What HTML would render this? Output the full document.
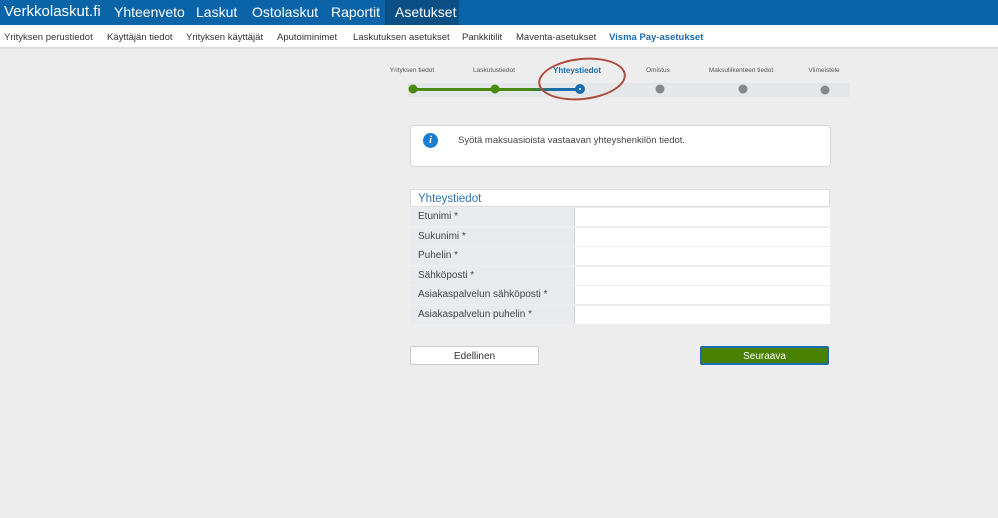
<!DOCTYPE html>
<html><head><meta charset="utf-8"><style>
*{margin:0;padding:0;box-sizing:border-box}
body{width:998px;height:518px;background:#ededed;font-family:"Liberation Sans",sans-serif;position:relative;overflow:hidden}
.top{position:absolute;left:0;top:0;width:998px;height:25px;background:#0b64a8}
.top span{position:absolute;top:4px;color:#fff;font-size:14px}
.act{position:absolute;left:385px;top:0;width:74px;height:25px;background:#0a4f86}
.sub{position:absolute;left:0;top:25px;width:998px;height:24px;background:#fff;border-bottom:2px solid #ddd}
.sub span{position:absolute;top:7px;font-size:9.5px;color:#333}
.lbl{position:absolute;top:67px;font-size:6.5px;color:#555;transform:translateX(-50%);white-space:nowrap}
.dot{position:absolute;width:9px;height:9px;border-radius:50%;background:#888;transform:translate(-50%,-50%)}
.box{position:absolute;background:#fff;border:1px solid #d6d6d6}
.row{position:absolute;left:410px;width:420px;height:18px;background:#fff}
.row div{position:absolute;left:0;top:0;width:165px;height:18px;background:#e8eaed;border-right:1px solid #d4d4d4;font-size:10px;color:#444;padding:3px 0 0 8px}
.btn{position:absolute;top:346px;height:19px;width:129px;font-size:10px;text-align:center;padding-top:4px;border-radius:2px}
</style></head><body>
<div class="top"><div class="act"></div>
<span style="left:4px;font-size:15px;top:3px">Verkkolaskut.fi</span>
<span style="left:114px">Yhteenveto</span>
<span style="left:196px">Laskut</span>
<span style="left:252px">Ostolaskut</span>
<span style="left:331px">Raportit</span>
<span style="left:395px">Asetukset</span></div>
<div class="sub">
<span style="left:4px">Yrityksen perustiedot</span>
<span style="left:107px">Käyttäjän tiedot</span>
<span style="left:186px">Yrityksen käyttäjät</span>
<span style="left:277px">Aputoiminimet</span>
<span style="left:353px">Laskutuksen asetukset</span>
<span style="left:462px">Pankkitilit</span>
<span style="left:516px">Maventa-asetukset</span>
<span style="left:609px;color:#1a6bb0;font-weight:bold">Visma Pay-asetukset</span></div>
<div style="position:absolute;left:408px;top:83px;width:442px;height:14px;background:#e4e7ea"></div>
<div style="position:absolute;left:413px;top:88px;width:82px;height:3px;background:#4a8a0e"></div>
<div style="position:absolute;left:495px;top:88px;width:85px;height:3px;background:linear-gradient(90deg,#4a8a0e,#4a8a0e 40%,#1a6bb0 70%)"></div>
<div class="lbl" style="left:412px">Yrityksen tiedot</div>
<div class="lbl" style="left:494px">Laskutustiedot</div>
<div class="lbl" style="left:577px;top:66px;font-size:8px;font-weight:bold;color:#1a6bb0">Yhteystiedot</div>
<div class="lbl" style="left:658px">Omistus</div>
<div class="lbl" style="left:741px">Maksuliikenteen tiedot</div>
<div class="lbl" style="left:824px">Viimeistele</div>
<div class="dot" style="left:413px;top:89px;background:#4a8a0e"></div>
<div class="dot" style="left:495px;top:89px;background:#4a8a0e"></div>
<div class="dot" style="left:580px;top:89px;background:#1a6bb0;border:2px solid #1a6bb0;width:10px;height:10px"><div style="position:absolute;left:2px;top:2px;width:2px;height:2px;background:#fff;border-radius:50%"></div></div>
<div class="dot" style="left:660px;top:89px"></div>
<div class="dot" style="left:743px;top:89px"></div>
<div class="dot" style="left:825px;top:90px"></div>
<div style="position:absolute;left:538px;top:58px;width:88px;height:42px;border:2px solid #b04a3a;border-radius:50%;transform:rotate(-6deg)"></div>
<div class="box" style="left:410px;top:125px;width:421px;height:42px;border-radius:4px"></div>
<div style="position:absolute;left:423px;top:133px;width:15px;height:15px;border-radius:50%;background:#1a7fd0;color:#fff;font-size:10px;font-weight:bold;font-style:italic;text-align:center;line-height:15px;font-family:'Liberation Serif',serif">i</div>
<div style="position:absolute;left:458px;top:135px;font-size:9.5px;color:#444">Syötä maksuasioista vastaavan yhteyshenkilön tiedot.</div>
<div style="position:absolute;left:410px;top:189px;width:420px;height:18px;background:#fff;border:1px solid #ddd;font-size:11.5px;color:#2f73b4;padding:3px 0 0 7px">Yhteystiedot</div>
<div class="row" style="top:208px"><div>Etunimi *</div></div>
<div class="row" style="top:228px"><div>Sukunimi *</div></div>
<div class="row" style="top:247px"><div>Puhelin *</div></div>
<div class="row" style="top:267px"><div>Sähköposti *</div></div>
<div class="row" style="top:286px"><div>Asiakaspalvelun sähköposti *</div></div>
<div class="row" style="top:306px"><div>Asiakaspalvelun puhelin *</div></div>
<div class="btn" style="left:410px;background:#fff;border:1px solid #ccc;color:#333">Edellinen</div>
<div class="btn" style="left:700px;background:#4a8200;border:2px solid #1a6bb0;color:#fff;padding-top:3px">Seuraava</div>
</body></html>
